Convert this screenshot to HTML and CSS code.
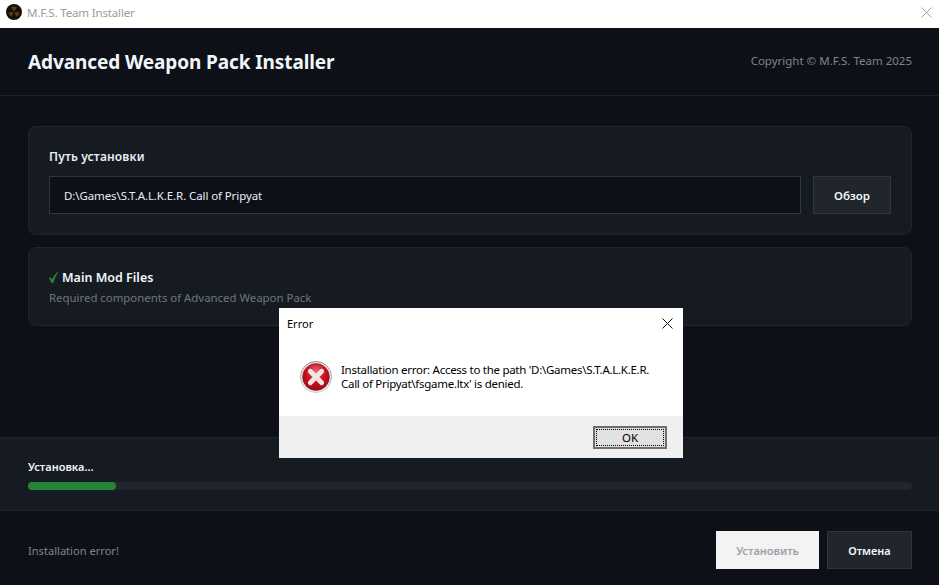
FILE: index.html
```html
<!DOCTYPE html>
<html lang="ru">
<head>
<meta charset="utf-8">
<title>M.F.S. Team Installer</title>
<link rel="stylesheet" href="styles.css">
</head>
<body>
<div class="window">
  <div class="titlebar">
    <svg class="app-icon" width="16" height="16" viewBox="0 0 16 16">
      <circle cx="8" cy="8" r="8" fill="#14100a"/>
      <path d="M8 8 L5.2 3.4 A5.4 5.4 0 0 1 10.8 3.4 Z M8 8 L13.4 8.2 A5.4 5.4 0 0 1 10.6 12.8 Z M8 8 L5.4 12.8 A5.4 5.4 0 0 1 2.6 8.2 Z" fill="#5e3d0e"/>
      <circle cx="8" cy="8" r="1.2" fill="#14100a"/>
    </svg>
    <span class="app-title">M.F.S. Team Installer</span>
    <svg class="win-close" width="11" height="11" viewBox="0 0 11 11"><path d="M.5 .5 L10.5 10.5 M10.5 .5 L.5 10.5" stroke="#a0a0a0" stroke-width="1" fill="none"/></svg>
  </div>
  <header class="header">
    <h1 class="heading">Advanced Weapon Pack Installer</h1>
    <span class="copyright">Copyright © M.F.S. Team 2025</span>
  </header>
  <main class="content">
    <section class="card">
      <div class="label">Путь установки</div>
      <div class="path-row">
        <div class="path-input">D:\Games\S.T.A.L.K.E.R. Call of Pripyat</div>
        <div class="btn btn-dark btn-browse">Обзор</div>
      </div>
    </section>
    <section class="card card-mod">
      <div class="mod-title">
        <svg class="check" width="9" height="11" viewBox="0 0 9 11"><path d="M0 6.2 L1.6 5.2 L3.2 7.6 C4.4 4.8 6.2 2 8.2 0 L9 .4 C7.2 3 5.6 6.6 4.4 11 L2.8 11 Z" fill="#238636"/></svg>
        <span>Main Mod Files</span>
      </div>
      <div class="mod-desc">Required components of Advanced Weapon Pack</div>
    </section>
  </main>
  <section class="progress">
    <div class="progress-label">Установка...</div>
    <div class="track"><div class="fill" style="width:10%"></div></div>
  </section>
  <footer class="footer">
    <span class="status">Installation error!</span>
    <div class="actions">
      <div class="btn btn-disabled">Установить</div>
      <div class="btn btn-dark btn-cancel">Отмена</div>
    </div>
  </footer>
</div>
<div class="dialog">
  <div class="dialog-top">
    <div class="dialog-title">
      <span>Error</span>
      <svg width="11" height="11" viewBox="0 0 11 11"><path d="M.5 .5 L10.5 10.5 M10.5 .5 L.5 10.5" stroke="#111" stroke-width="1" fill="none"/></svg>
    </div>
    <div class="dialog-body">
      <svg class="err-icon" width="32" height="32" viewBox="0 0 32 32">
        <defs>
          <radialGradient id="red" cx="50%" cy="30%" r="75%">
            <stop offset="0" stop-color="#ea6a72"/>
            <stop offset=".5" stop-color="#c8101c"/>
            <stop offset="1" stop-color="#900a12"/>
          </radialGradient>
          <linearGradient id="ring" x1="0" y1="0" x2="0" y2="1">
            <stop offset="0" stop-color="#8a8a8a"/>
            <stop offset="1" stop-color="#d0d0d0"/>
          </linearGradient>
        </defs>
        <circle cx="16" cy="16" r="15.5" fill="#ececec" stroke="url(#ring)"/>
        <circle cx="16" cy="16" r="13.4" fill="url(#red)" stroke="#8a1a1f" stroke-width=".6"/>
        <path d="M10.3 10.3 L21.7 21.7 M21.7 10.3 L10.3 21.7" stroke="#f4e6e6" stroke-width="4.8" stroke-linecap="round" fill="none"/>
      </svg>
      <p class="dialog-msg">Installation error: Access to the path 'D:\Games\S.T.A.L.K.E.R. Call of Pripyat\fsgame.ltx' is denied.</p>
    </div>
  </div>
  <div class="dialog-foot">
    <div class="ok"><span class="ok-inner">OK</span></div>
  </div>
</div>
</body>
</html>
```
FILE: styles.css
```css
* { box-sizing: border-box; }
html, body { margin: 0; height: 100%; overflow: hidden; }
body {
  position: relative;
  font-family: "Noto Sans", "Open Sans", sans-serif;
  background: #0d1117;
  color: #f0f6fc;
}
.window { display: flex; flex-direction: column; height: 585px; }
.titlebar {
  height: 28px;
  background: #fff;
  display: flex;
  align-items: center;
  padding: 0 7px 4px 6px;
  flex: none;
}
.app-icon { flex: none; }
.app-title { margin-left: 5px; font-size: 11.5px; letter-spacing: -0.15px; color: #9a9a9a; }
.win-close { margin-left: auto; }
.header {
  height: 68px;
  flex: none;
  display: flex;
  align-items: center;
  justify-content: space-between;
  padding: 1px 27px 0 28px;
  border-bottom: 1px solid #1d2129;
}
.heading { margin: 0; font-size: 19px; letter-spacing: -0.1px; font-weight: 700; color: #f0f6fc; }
.copyright { font-size: 11.5px; color: #7d8590; margin-bottom: 3px; }
.content {
  flex: 1;
  padding: 30px 27px 0 28px;
  display: flex;
  flex-direction: column;
  gap: 12px;
}
.card {
  background: #161b22;
  border: 1px solid #21262d;
  border-radius: 8px;
  padding: 20px;
  height: 109px;
}
.card-mod { height: 79px; }
.label { font-size: 12px; letter-spacing: 0.15px; font-weight: 600; height: 29px; line-height: 19px; color: #e6edf3; }
.path-row { display: flex; gap: 12px; }
.path-input {
  flex: 1;
  height: 38px;
  background: #0d1117;
  border: 1px solid #30363d;
  padding: 0 14px;
  font-size: 11.5px;
  letter-spacing: -0.1px;
  line-height: 37px;
  color: #e6edf3;
}
.btn {
  height: 38px;
  display: flex;
  align-items: center;
  justify-content: center;
  font-size: 11px;
  font-weight: 600;
}
.btn-dark { background: #21262d; border: 1px solid #30363d; color: #f0f6fc; }
.btn-browse { width: 78px; font-size: 11.5px; }
.btn-cancel { width: 85px; }
.btn-disabled { width: 103px; background: #f3f3f3; color: #9aa0a8; }
.mod-title { display: flex; align-items: center; gap: 4px; font-size: 12.5px; font-weight: 600; height: 19px; line-height: 20px; }
.check { flex: none; }
.mod-desc { margin-top: 2px; font-size: 11.4px; color: #6e7681; line-height: 17px; }
.progress {
  height: 74px;
  flex: none;
  background: #161b22;
  border-top: 1px solid #21262d;
  border-bottom: 1px solid #21262d;
  padding: 20px 27px 0 28px;
}
.progress-label { font-size: 11px; font-weight: 600; line-height: 17px; }
.track { margin-top: 7px; height: 8px; border-radius: 4px; background: #21262d; }
.fill { height: 100%; border-radius: 4px; background: #238636; }
.footer {
  height: 74px;
  flex: none;
  display: flex;
  align-items: center;
  justify-content: space-between;
  padding: 4px 27px 0 28px;
}
.status { font-size: 11.1px; color: #7d8590; }
.actions { display: flex; gap: 8px; }
.dialog {
  position: absolute;
  left: 279px;
  top: 308px;
  width: 404px;
  height: 150px;
  background: #fff;
  display: flex;
  flex-direction: column;
  color: #000;
  font-size: 11.5px;
}
.dialog-top { flex: 1; }
.dialog-title {
  display: flex;
  justify-content: space-between;
  align-items: center;
  padding: 7px 10px 0 8px;
  height: 23px;
  font-size: 11px;
}
.dialog-title svg { margin-top: 1px; }
.dialog-body {
  display: flex;
  align-items: flex-start;
  padding: 30px 20px 0 21px;
  gap: 9px;
}
.dialog-msg { margin: 2px 0 0; line-height: 13.5px; letter-spacing: -0.28px; width: 322px; }
.dialog-foot {
  height: 42px;
  background: #f0f0f0;
  display: flex;
  justify-content: flex-end;
  padding: 10px 16px 0 0;
}
.ok {
  width: 74px;
  height: 23px;
  border: 2px solid #6e6e6e;
  background: #e1e1e1;
  padding: 1px;
}
.ok-inner {
  display: flex;
  align-items: center;
  justify-content: center;
  height: 100%;
  border: 1px dotted #000;
  line-height: 1;
}
```
